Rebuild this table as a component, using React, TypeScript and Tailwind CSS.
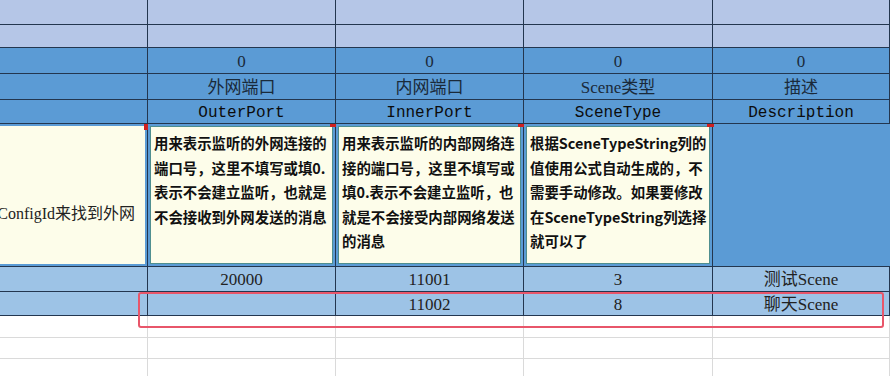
import React from "react";

const serif = { fontFamily: '"Liberation Serif", "Noto Sans CJK SC", serif' };
const mono = { fontFamily: '"Liberation Mono", "Noto Sans CJK SC", monospace' };
const sans = { fontFamily: '"Noto Sans CJK SC", "Noto Sans", sans-serif' };

const cols = "grid grid-cols-[148px_188px_188px_189px_1fr]";

const Row = ({ cells, className, h, font, textClass }: { cells: string[]; className: string; h: string; font: React.CSSProperties; textClass: string }) => (
  <div className={`${cols} ${h} overflow-hidden`}>
    {cells.map((c, i) => (
      <div
        key={i}
        className={`${className} ${textClass} h-full min-h-0 flex items-center justify-center border-b border-r border-[#23364f] whitespace-nowrap leading-[18px]`}
        style={font}
      >
        {c}
      </div>
    ))}
  </div>
);

const Note = ({ lines }: { lines: string[] }) => (
  <div className="relative bg-[#5b9bd5] border-r border-b border-[#23364f] p-[2px]">
    <div className="h-full bg-[#fdfdea] border border-[#4f8f8f] pl-[3px] pt-[4px] text-[14.4px] leading-[24.5px] font-bold text-[#111] whitespace-nowrap overflow-hidden" style={sans}>
      {lines.map((l, i) => (
        <div key={i}>{l}</div>
      ))}
    </div>
    <div className="absolute right-[-2px] top-0 w-[7px] h-[3px] bg-[#d02020]" />
  </div>
);

export default function App() {
  return (
    <div className="relative w-[890px] h-[376px] overflow-hidden bg-white">
      <Row cells={["", "", "", "", ""]} className="bg-[#b5c6e7]" h="h-[25px]" font={serif} textClass="" />
      <Row cells={["", "", "", "", ""]} className="bg-[#b5c6e7]" h="h-[23px]" font={serif} textClass="" />
      <Row cells={["", "0", "0", "0", "0"]} className="bg-[#5b9bd5] pt-[2px]" h="h-[26px]" font={serif} textClass="text-[17px] text-[#1a2a3a]" />
      <Row cells={["", "外网端口", "内网端口", "Scene类型", "描述"]} className="bg-[#5b9bd5] pt-[2px]" h="h-[26px]" font={serif} textClass="text-[17px] text-[#1a2a3a]" />
      <Row cells={["", "OuterPort", "InnerPort", "SceneType", "Description"]} className="bg-[#5b9bd5] pt-[2px]" h="h-[24px]" font={mono} textClass="text-[16px] text-[#0c0c0c]" />

      <div className={`${cols} h-[143px]`}>
        <div className="relative bg-[#5b9bd5] border-r border-b border-[#23364f] py-[2px] pr-[2px]">
          <div className="h-full bg-[#fdfdea] flex items-center justify-end overflow-hidden pt-[38px] pr-[10px]">
            <span className="text-[16px] text-[#222] whitespace-nowrap" style={serif}>SceneConfigId来找到外网</span>
          </div>
          <div className="absolute right-[-2px] top-0 w-[5px] h-[6px] bg-[#d02020]" />
        </div>
        <Note lines={["用来表示监听的外网连接的", "端口号，这里不填写或填0.", "表示不会建立监听，也就是", "不会接收到外网发送的消息"]} />
        <Note lines={["用来表示监听的内部网络连", "接的端口号，这里不填写或", "填0.表示不会建立监听，也", "就是不会接受内部网络发送", "的消息"]} />
        <Note lines={["根据SceneTypeString列的", "值使用公式自动生成的，不", "需要手动修改。如果要修改", "在SceneTypeString列选择", "就可以了"]} />
        <div className="bg-[#5b9bd5] border-b border-[#23364f]" />
      </div>

      <Row cells={["", "20000", "11001", "3", "测试Scene"]} className="bg-[#9dc3e6] pt-[2px]" h="h-[25px]" font={serif} textClass="text-[17px] text-[#222]" />
      <Row cells={["", "", "11002", "8", "聊天Scene"]} className="bg-[#9dc3e6] pt-[2px]" h="h-[24px]" font={serif} textClass="text-[17px] text-[#222]" />

      {[22, 21, 30].map((h, i) => (
        <div key={i} className={`${cols}`} style={{ height: h }}>
          {[0, 1, 2, 3, 4].map((j) => (
            <div key={j} className="border-r border-b border-[#dadada]" />
          ))}
        </div>
      ))}

      <div className="absolute left-[138px] top-[292px] w-[746px] h-[36px] rounded-[3px] border-2 border-[#e8566a]" />
    </div>
  );
}
